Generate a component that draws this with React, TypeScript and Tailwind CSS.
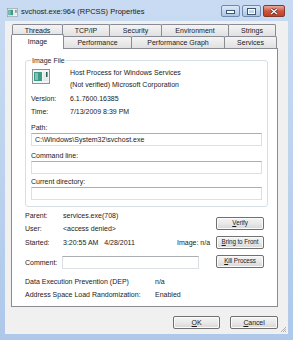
import React from "react";

const ExeIcon = ({ className }: { className?: string }) => (
  <svg className={className} viewBox="0 0 18 15" fill="none">
    <rect x="0.5" y="0.5" width="17" height="14" fill="#f3f5f5" stroke="#8b9396" />
    <rect x="2" y="3" width="8" height="9" fill="#3f9a87" />
    <rect x="3" y="4" width="3" height="7" fill="#7cc4b2" />
    <rect x="11" y="3" width="5" height="9" fill="#e4ebea" />
    <rect x="14" y="3" width="1.5" height="5" fill="#2f5d4f" />
  </svg>
);

const topTabs = [
  { label: "Threads", cls: "w-[51px]" },
  { label: "TCP/IP", cls: "w-[48px]" },
  { label: "Security", cls: "w-[53px]" },
  { label: "Environment", cls: "w-[68px]" },
  { label: "Strings", cls: "w-[48px]" },
];

const bottomTabs = [
  { label: "Performance", cls: "w-[69px]" },
  { label: "Performance Graph", cls: "w-[94px]" },
  { label: "Services", cls: "w-[53px]" },
];

const Textbox = ({ children, className }: { children?: React.ReactNode; className?: string }) => (
  <div
    className={`h-[13px] bg-white border border-[#dbdfe6] border-t-[#abadb3] flex items-center pl-[3px] ${className ?? ""}`}
  >
    {children}
  </div>
);

const Btn = ({ children, className }: { children: React.ReactNode; className?: string }) => (
  <div
    className={`h-[13px] rounded-[2px] border border-[#707070] bg-gradient-to-b from-[#f4f4f4] via-[#e9e9e9] to-[#d6d6d6] flex items-center justify-center whitespace-nowrap tracking-[-0.1px] shadow-[inset_0_0_0_1px_#fbfbfb] ${className ?? ""}`}
  >
    {children}
  </div>
);

export default function App() {
  return (
    <div className="w-[293px] h-[340px] flex flex-col bg-gradient-to-b from-[#c8dbf2] via-[#bcd2ee] to-[#aec8ea] font-['Liberation_Sans',Arial,sans-serif] text-[7px] text-[#1a1a1a] leading-none overflow-hidden">
      {/* Title bar */}
      <div className="h-[21px] flex items-start shrink-0">
        <div className="flex items-center h-[21px] pl-[7px] pt-[3px]">
          <ExeIcon className="w-[11px] h-[9px]" />
          <span className="ml-[3px] text-[7.5px]">svchost.exe:964 (RPCSS) Properties</span>
        </div>
        <div className="ml-auto mr-[8px] mt-[5px] flex gap-[2px]">
          <div className="w-[19px] h-[12px] rounded-[2px] border border-[#6f8aae] bg-gradient-to-b from-[#dce8f6] to-[#aec6e6] flex items-end justify-center pb-[2px]">
            <div className="w-[7px] h-[2px] bg-white border border-[#3b5677] box-content" />
          </div>
          <div className="w-[19px] h-[12px] rounded-[2px] border border-[#6f8aae] bg-gradient-to-b from-[#dce8f6] to-[#aec6e6] flex items-center justify-center">
            <div className="w-[7px] h-[5px] border-[1.5px] border-white outline outline-1 outline-[#3b5677]" />
          </div>
          <div className="w-[22px] h-[12px] rounded-[2px] border border-[#83392f] bg-gradient-to-b from-[#e9a99b] via-[#d0533e] to-[#c23f28] flex items-center justify-center">
            <svg width="8" height="7" viewBox="0 0 8 7">
              <path d="M1 1 L7 6 M7 1 L1 6" stroke="#4b1d15" strokeWidth="2.6" />
              <path d="M1 1 L7 6 M7 1 L1 6" stroke="#ffffff" strokeWidth="1.4" />
            </svg>
          </div>
        </div>
      </div>

      {/* Client area */}
      <div className="ml-[5px] w-[283px] h-[313px] bg-[#f0f0f0] flex flex-col pt-[3px] relative">
        {/* tab rows */}
        <div className="flex ml-[7px] h-[12px]">
          {topTabs.map((t, i) => (
            <div
              key={t.label}
              className={`${t.cls} h-[12px] border border-b-0 border-[#898c95] rounded-t-[2px] bg-gradient-to-b from-[#f4f4f4] to-[#e1e1e1] flex items-center justify-center ${i > 0 ? "-ml-px" : ""}`}
            >
              {t.label}
            </div>
          ))}
        </div>
        <div className="flex ml-[6px] h-[12px]">
          <div className="w-[53px] h-[15px] -mt-[2px] border border-b-0 border-[#898c95] rounded-t-[2px] bg-white flex items-start justify-center pt-[3px] relative z-10">
            Image
          </div>
          {bottomTabs.map((t) => (
            <div
              key={t.label}
              className={`${t.cls} h-[12px] -ml-px border border-b-0 border-[#898c95] rounded-t-[2px] bg-gradient-to-b from-[#f4f4f4] to-[#e1e1e1] flex items-center justify-center`}
            >
              {t.label}
            </div>
          ))}
        </div>

        {/* tab page */}
        <div className="ml-[6px] w-[267px] h-[259px] bg-white border border-[#898c95] pl-[13px] flex flex-col">
          <fieldset className="w-[243px] mt-[7px] border border-[#d5dfe5] rounded-[3px] pl-[5px] pr-[5px] pb-[6px]">
            <legend className="px-[1px] leading-[9px] text-[#2b2b2b]">Image File</legend>
            <div className="grid grid-cols-[39px_1fr] mt-[2px]">
              <div className="pt-[2px] pl-[1px]">
                <ExeIcon className="w-[18px] h-[15px]" />
              </div>
              <div className="leading-[12px]">
                <div>Host Process for Windows Services</div>
                <div>(Not verified) Microsoft Corporation</div>
              </div>
              <div className="leading-[13px] mt-[1px]">Version:</div>
              <div className="leading-[13px] mt-[1px]">6.1.7600.16385</div>
              <div className="leading-[13px]">Time:</div>
              <div className="leading-[13px]">7/13/2009 8:39 PM</div>
            </div>
            <div className="leading-[10px] mt-[5px]">Path:</div>
            <Textbox className="w-[231px]">C:\Windows\System32\svchost.exe</Textbox>
            <div className="leading-[10px] mt-[5px]">Command line:</div>
            <Textbox className="w-[231px]" />
            <div className="leading-[10px] mt-[3px]">Current directory:</div>
            <Textbox className="w-[231px]" />
          </fieldset>

          <div className="flex">
            <div className="w-[191px] flex flex-col">
              <div className="flex leading-[13px] mt-[2px]">
                <span className="w-[38px]">Parent:</span>
                <span>services.exe(708)</span>
              </div>
              <div className="flex leading-[13px]">
                <span className="w-[38px]">User:</span>
                <span>&lt;access denied&gt;</span>
              </div>
              <div className="flex leading-[13px] mt-[1px]">
                <span className="w-[38px]">Started:</span>
                <span className="w-[114px]">3:20:55 AM&nbsp;&nbsp;&nbsp;4/28/2011</span>
                <span>Image: n/a</span>
              </div>
              <div className="flex items-center mt-[7px]">
                <span className="w-[37px]">Comment:</span>
                <Textbox className="w-[137px]" />
              </div>
            </div>
            <div className="flex flex-col gap-[6px] mt-[10px]">
              <Btn className="w-[48px] text-[6.3px]">
                <span className="underline">V</span>erify
              </Btn>
              <Btn className="w-[48px] text-[6.3px]">
                <span className="underline">B</span>ring to Front
              </Btn>
              <Btn className="w-[48px] text-[6.3px]">
                <span className="underline">K</span>ill Process
              </Btn>
            </div>
          </div>

          <div className="flex leading-[13px] mt-[6px]">
            <span className="w-[130px]">Data Execution Prevention (DEP)</span>
            <span>n/a</span>
          </div>
          <div className="flex leading-[13px]">
            <span className="w-[130px]">Address Space Load Randomization:</span>
            <span>Enabled</span>
          </div>
        </div>

        {/* dialog buttons */}
        <div className="flex justify-end gap-[10px] mt-[9px] w-[273px]">
          <Btn className="w-[47px] text-[7px] border-[#3c7fb1] shadow-[inset_0_0_0_1px_#9fdcf8]">
            <span className="underline">O</span>K
          </Btn>
          <Btn className="w-[48px] text-[7px]">
            <span className="underline">C</span>ancel
          </Btn>
        </div>

        {/* size grip */}
        <svg className="absolute right-[1px] bottom-[1px]" width="7" height="7" viewBox="0 0 7 7">
          <path d="M6 1 L1 6 M6 3 L3 6 M6 5 L5 6" stroke="#a0a0a0" strokeWidth="0.8" />
        </svg>
      </div>
    </div>
  );
}
